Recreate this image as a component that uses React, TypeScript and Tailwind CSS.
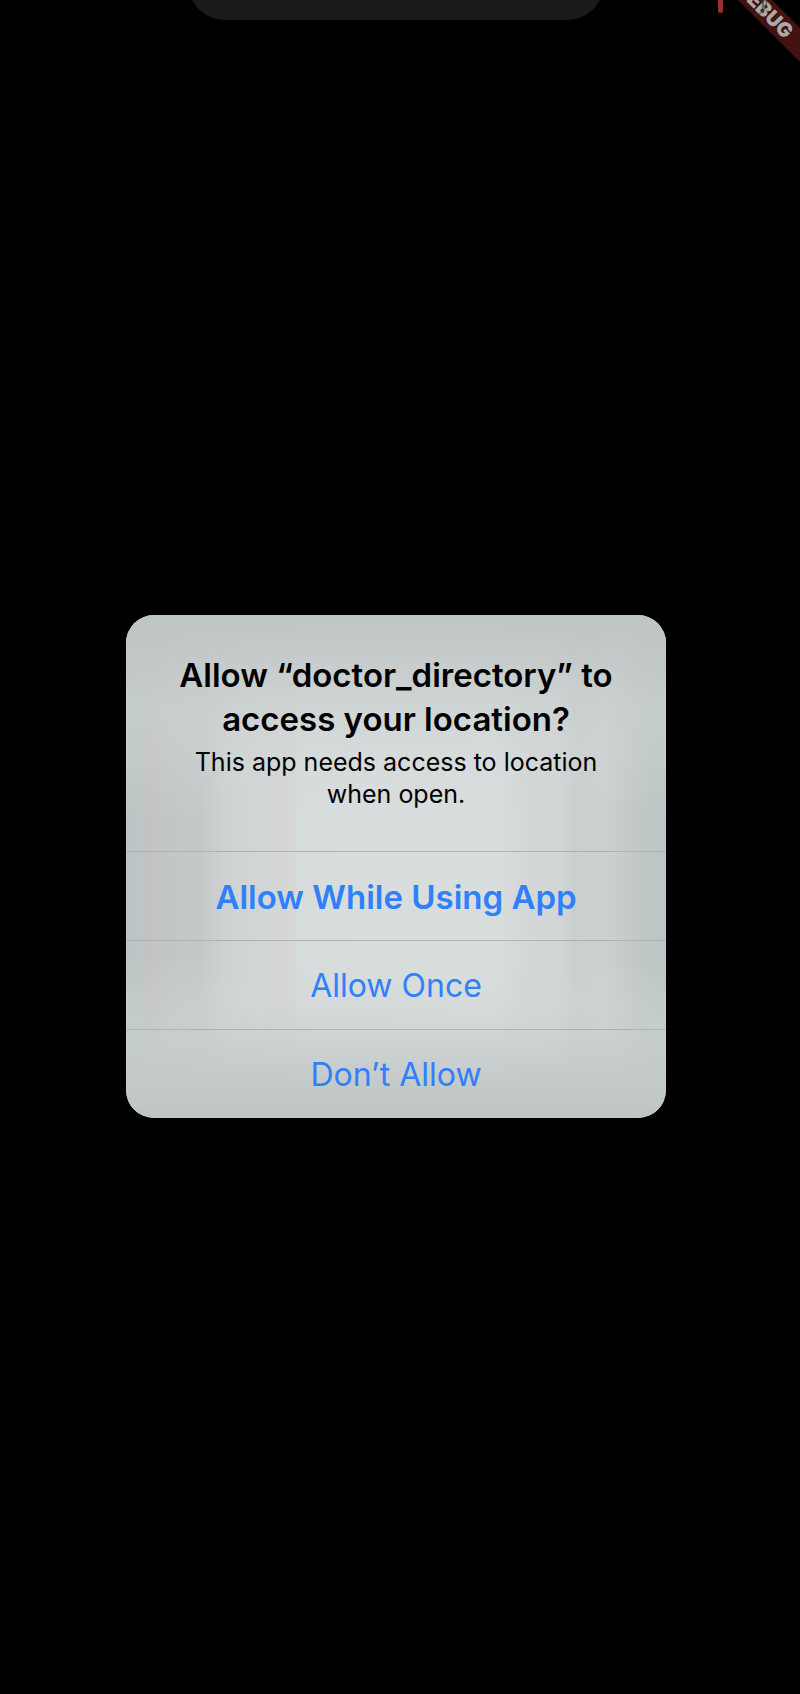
const actionClass =
  "h-[89px] w-full border-t border-[#adb3b3] pt-0.5 text-center leading-[44px] text-[#2f80fa]";

const horizontalShade =
  "bg-[linear-gradient(to_right,#bcc5c5_0%,#bdc5c5_3%,#c3c2c1_4%,#c3c6c6_7%,#c5c9c9_14%,#ced3d3_19%,#d3d6d6_26%,#d6d6d5_31%,#d7dddc_32%,#d8dddd_69%,#d4d8d8_73%,#d3d6d6_80%,#c9cfcf_83%,#ccd0d0_89%,#c4c9c9_93%,#bec6c6_97%,#bcc5c5_100%)]";

const verticalShade =
  "bg-[linear-gradient(to_bottom,#bfc4c4_0%,#c3c8c8e0_8%,#cbd1d1a0_19%,#d2d6d650_28%,#d8dddd00_40%,#d8dddd00_68%,#d2d6d650_77%,#cad0d0b0_84%,#c4caca_93%,#bfc5c5_100%)]";

export default function App() {
  return (
    <main className="relative flex min-h-screen items-center justify-center overflow-hidden bg-black pt-[38px] pr-2 font-['Inter','Liberation_Sans',sans-serif]">
      <div className="absolute inset-x-0 top-0 flex h-5 justify-center overflow-hidden pr-2">
        <div className="h-[74px] w-[416px] shrink-0 self-end rounded-full bg-[#1b1b1b]" />
      </div>
      <div className="absolute top-0 right-[77px] h-[13px] w-[5px] rounded-b-sm bg-[#9d2e28]" />
      <div className="absolute -top-0.5 -right-[55px] flex h-6 w-[180px] rotate-45 items-center justify-center bg-[#431211] text-[20px] leading-6 font-black text-[#a9a9a9]">
        DEBUG
      </div>
      <svg
        className="absolute top-0 right-[30px]"
        width="18"
        height="18"
        viewBox="0 0 18 18"
        fill="none"
        stroke="#3a3a3a"
        strokeOpacity="0.6"
        aria-hidden="true"
      >
        <path d="M14 0C16 6 12 14 2 15" strokeWidth="1.5" />
        <path d="M11 0v13" strokeWidth="2" />
      </svg>

      <section
        role="alertdialog"
        aria-labelledby="alert-title"
        aria-describedby="alert-message"
        className={`w-full max-w-[540px] overflow-hidden rounded-[28px] ${horizontalShade}`}
      >
        <div className={verticalShade}>
          <header className="px-10 pt-[38px] pb-[41px] text-center text-black">
            <h1 id="alert-title" className="text-[33px] leading-[44px] font-semibold">
              Allow “doctor_directory” to
              <br />
              access your location?
            </h1>
            <p id="alert-message" className="mt-[5px] text-[25px] leading-8">
              This app needs access to location
              <br />
              when open.
            </p>
          </header>
          <button type="button" className={`${actionClass} text-[33px] font-semibold`}>
            Allow While Using App
          </button>
          <button type="button" className={`${actionClass} text-[32px]`}>
            Allow Once
          </button>
          <button type="button" className={`${actionClass} text-[32px]`}>
            Don’t Allow
          </button>
        </div>
      </section>
    </main>
  );
}
